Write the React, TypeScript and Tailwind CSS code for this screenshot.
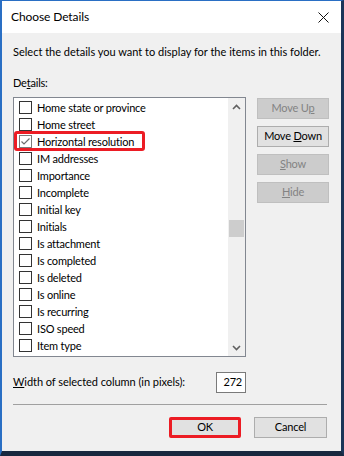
import React from 'react'

const items = [
  'Home state or province',
  'Home street',
  'Horizontal resolution',
  'IM addresses',
  'Importance',
  'Incomplete',
  'Initial key',
  'Initials',
  'Is attachment',
  'Is completed',
  'Is deleted',
  'Is online',
  'Is recurring',
  'ISO speed',
  'Item type',
]

const Checkbox: React.FC<{ checked?: boolean }> = ({ checked }) => (
  <span
    className={`flex h-[13px] w-[13px] shrink-0 items-center justify-center border bg-white ${
      checked ? 'border-[#7a7a7a]' : 'border-[#333333]'
    }`}
  >
    {checked && (
      <svg width="11" height="11" viewBox="0 0 11 11" fill="none">
        <path d="M1.5 5.5 L4 8 L9.5 2.5" stroke="#6d6d6d" strokeWidth="1.2" />
      </svg>
    )}
  </span>
)

const SideButton: React.FC<{ children: React.ReactNode; enabled?: boolean }> = ({ children, enabled }) => (
  <div
    className={`flex h-[21px] w-[72px] items-center justify-center border ${
      enabled ? 'border-[#adadad] bg-[#e1e1e1] text-black' : 'border-[#bfbfbf] bg-[#cccccc] text-[#838383]'
    }`}
  >
    <span className="whitespace-pre">{children}</span>
  </div>
)

export default function App() {
  return (
    <div
      className="flex h-[456px] w-[344px] flex-col border-t border-l-2 border-r-[3px] border-b-[5px] border-t-[#2a6fc4] border-l-[#2a6fc4] border-r-[#1b3558] border-b-[#18283f] text-black"
      style={{ fontFamily: 'Lato, "Open Sans", sans-serif' }}
    >
      {/* title bar */}
      <div className="flex h-[32px] shrink-0 items-center justify-between bg-white pl-[9px] pr-[12px]">
        <span className="text-[12px] tracking-[-0.1px]">Choose Details</span>
        <svg width="11" height="11" viewBox="0 0 11 11">
          <path d="M0.5 0.5 L10.5 10.5 M10.5 0.5 L0.5 10.5" stroke="#111" strokeWidth="1" />
        </svg>
      </div>

      {/* body */}
      <div className="flex flex-1 flex-col bg-[#f0f0f0] pl-[11px] pr-[11px] text-[11px] tracking-[-0.2px]">
        <div className="mt-[11px] whitespace-nowrap leading-[16px] tracking-normal">
          Select the details you want to display for the items in this folder.
        </div>
        <div className="mt-[15px] leading-[16px]">
          De<span className="underline">t</span>ails:
        </div>

        <div className="mt-[6px] flex gap-[11px]">
          {/* list */}
          <div className="flex h-[260px] w-[233px] border border-[#828790] bg-white">
            <div className="flex-1 overflow-hidden pt-[1px]">
              {items.map((it, i) => (
                <div key={it} className="relative flex h-[17px] items-center gap-[5px] pl-[5px]">
                  <Checkbox checked={i === 2} />
                  <span className="whitespace-nowrap leading-[17px]">{it}</span>
                  {i === 2 && (
                    <span className="absolute -top-[2px] -bottom-[1px] left-0 w-[131px] rounded-[3px] border-[3px] border-[#ec1c24]" />
                  )}
                </div>
              ))}
              {/* next row, mostly scrolled out of view */}
              <div className="flex h-[17px] items-center pl-[5px]">
                <Checkbox />
              </div>
            </div>
            {/* scrollbar */}
            <div className="flex w-[17px] flex-col items-center bg-[#f0f0f0]">
              <div className="flex h-[17px] w-full items-center justify-center">
                <svg width="9" height="6" viewBox="0 0 9 6">
                  <path d="M1 5 L4.5 1.5 L8 5" stroke="#606060" strokeWidth="1.6" fill="none" />
                </svg>
              </div>
              <div className="mt-[105px] h-[17px] w-[15px] bg-[#cdcdcd]" />
              <div className="flex-1" />
              <div className="flex h-[17px] w-full items-center justify-center">
                <svg width="9" height="6" viewBox="0 0 9 6">
                  <path d="M1 1 L4.5 4.5 L8 1" stroke="#606060" strokeWidth="1.6" fill="none" />
                </svg>
              </div>
            </div>
          </div>

          {/* side buttons */}
          <div className="flex flex-col gap-[7px] pt-[1px]">
            <SideButton>
              Move U<span className="underline">p</span>
            </SideButton>
            <SideButton enabled>
              Move <span className="underline">D</span>own
            </SideButton>
            <SideButton>
              <span className="underline">S</span>how
            </SideButton>
            <SideButton>
              <span className="underline">H</span>ide
            </SideButton>
          </div>
        </div>

        {/* width row */}
        <div className="mt-[15px] flex w-[233px] items-center justify-between">
          <span className="whitespace-nowrap tracking-[-0.05px]">
            <span className="underline">W</span>idth of selected column (in pixels):
          </span>
          <div className="flex h-[21px] w-[30px] items-center justify-end border border-[#7a7a7a] bg-white pr-[3px]">272</div>
        </div>

        <div className="mt-[11px] mr-[3px] h-px bg-[#a0a0a0]" />

        {/* bottom buttons */}
        <div className="mt-[12px] flex justify-end gap-[13px] pr-[3px]">
          <div className="flex h-[21px] w-[72px] items-center justify-center rounded-[2px] border-[3px] border-[#ec1c24] bg-[#e1e1e1]">OK</div>
          <div className="flex h-[21px] w-[73px] items-center justify-center border border-[#adadad] bg-[#e1e1e1]">Cancel</div>
        </div>
      </div>
    </div>
  )
}
